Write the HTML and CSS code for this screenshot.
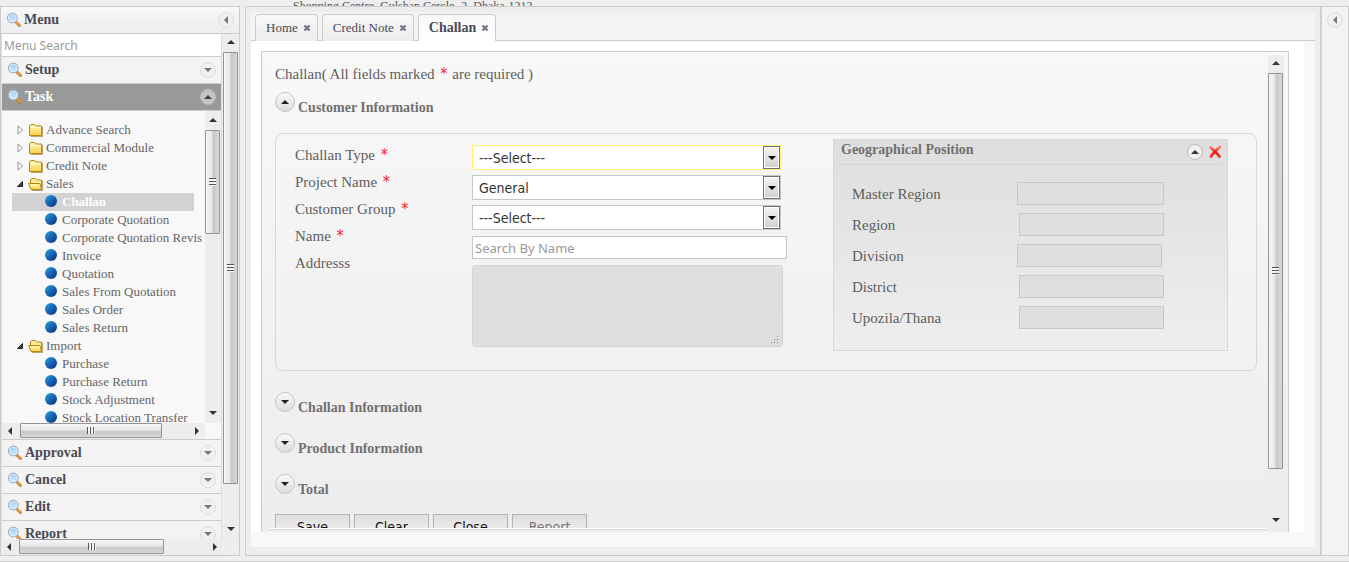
FILE: index.html
```html
<!DOCTYPE html>
<html lang="en">
<head>
<meta charset="utf-8">
<title>Challan</title>
<link rel="stylesheet" href="styles.css">
</head>
<body>
<svg width="0" height="0" class="defs" aria-hidden="true">
  <defs>
    <linearGradient id="gFolder" x1="0" y1="0" x2="0" y2="1"><stop offset="0" stop-color="#fffbb5"/><stop offset="1" stop-color="#fbd04e"/></linearGradient>
    <linearGradient id="gBall" x1="0" y1="0" x2="1" y2="1"><stop offset="0" stop-color="#2aa3dc"/><stop offset=".5" stop-color="#1565b4"/><stop offset="1" stop-color="#0a2b78"/></linearGradient>
    <linearGradient id="gLens" x1="0" y1="0" x2="0" y2="1"><stop offset="0" stop-color="#9ccdf8"/><stop offset="1" stop-color="#d6ecfd"/></linearGradient>
    <linearGradient id="gCross" x1="0" y1="0" x2="0" y2="1"><stop offset="0" stop-color="#ff8a80"/><stop offset=".5" stop-color="#f5190f"/><stop offset="1" stop-color="#e8382c"/></linearGradient>
    <symbol id="lens" viewBox="0 0 16 16">
      <path d="M10 10l3.500 3.500" stroke="#b4672a" stroke-width="2.800" stroke-linecap="round"/>
      <path d="M10 9.600l3.600 3.600" stroke="#f6a93c" stroke-width="1.600" stroke-linecap="round"/>
      <circle cx="6.300" cy="6" r="4.900" fill="url(#gLens)" stroke="#9fb1c2" stroke-width="1.100"/>
      <circle cx="6.300" cy="6" r="3.900" fill="none" stroke="#e8f4ff" stroke-width=".7"/>
    </symbol>
    <symbol id="folder" viewBox="0 0 16 14">
      <path d="M1.500 12.500V3l1.200-1.500h4L8 3h5.500v9.500z" fill="url(#gFolder)" stroke="#b8860f"/>
      <path d="M2.500 4.500h10" stroke="#fffde0"/>
      <path d="M14.500 4v9.500H3" fill="none" stroke="#8e6a1a" stroke-opacity=".6"/>
    </symbol>
    <symbol id="open" viewBox="0 0 16 14">
      <path d="M2.500 6V3l1.200-1.500h4L9 3h4.500v9H3z" fill="#fdeb9a" stroke="#b8860f"/>
      <path d="M.6 6.500h11.200l2 6H3z" fill="url(#gFolder)" stroke="#b8860f"/>
      <path d="M14.700 4v9.500H4" fill="none" stroke="#8e6a1a" stroke-opacity=".6"/>
    </symbol>
    <symbol id="ball" viewBox="0 0 12 12"><circle cx="6" cy="6" r="6" fill="url(#gBall)"/></symbol>
    <symbol id="shut" viewBox="0 0 8 10"><path d="M2 1v8l4.500-4z" fill="#fff" stroke="#999"/></symbol>
    <symbol id="down" viewBox="0 0 8 10"><path d="M6.500 2.500v5h-5z" fill="#444" stroke="#222"/></symbol>
    <symbol id="tri" viewBox="0 0 8 8"><path d="M0 6h8L4 2z"/></symbol>
    <symbol id="close" viewBox="0 0 8 8"><path d="M1.500 1.500l5 5M6.500 1.500l-5 5" stroke="#707888" stroke-width="2.400"/></symbol>
    <symbol id="cross" viewBox="0 0 14 14"><path d="M2.500 2.500C5 4 8.500 8 11.500 11.500M12 1.800C8 4.500 5 8 3 11.500" fill="none" stroke="url(#gCross)" stroke-width="2.700" stroke-linecap="round"/></symbol>
  </defs>
</svg>

<header class="top">Shopping Centre, Gulshan Cercle -2, Dhaka-1212</header>

<main class="shell">
  <aside class="side">
    <div class="side-head">
      <svg class="lens"><use href="#lens"/></svg><span class="grow">Menu</span>
      <button class="round small left" aria-label="Collapse menu"><svg><use href="#tri"/></svg></button>
    </div>
    <div class="side-body">
      <div class="side-main">
        <input class="menu-search" type="text" placeholder="Menu Search" aria-label="Menu Search">
        <div class="acc"><svg class="lens"><use href="#lens"/></svg><span class="grow">Setup</span><button class="round small flip" aria-label="Open Setup"><svg><use href="#tri"/></svg></button></div>
        <div class="acc active"><svg class="lens"><use href="#lens"/></svg><span class="grow">Task</span><button class="round small" aria-label="Close Task"><svg><use href="#tri"/></svg></button></div>
        <div class="tree-box">
          <div class="tree-row">
            <ul class="tree">
              <li><svg class="tog"><use href="#shut"/></svg><svg class="fold"><use href="#folder"/></svg>Advance Search</li>
              <li><svg class="tog"><use href="#shut"/></svg><svg class="fold"><use href="#folder"/></svg>Commercial Module</li>
              <li><svg class="tog"><use href="#shut"/></svg><svg class="fold"><use href="#folder"/></svg>Credit Note</li>
              <li><svg class="tog"><use href="#down"/></svg><svg class="fold"><use href="#open"/></svg>Sales</li>
              <li class="leaf current"><svg class="ball"><use href="#ball"/></svg>Challan</li>
              <li class="leaf"><svg class="ball"><use href="#ball"/></svg>Corporate Quotation</li>
              <li class="leaf"><svg class="ball"><use href="#ball"/></svg>Corporate Quotation Revis</li>
              <li class="leaf"><svg class="ball"><use href="#ball"/></svg>Invoice</li>
              <li class="leaf"><svg class="ball"><use href="#ball"/></svg>Quotation</li>
              <li class="leaf"><svg class="ball"><use href="#ball"/></svg>Sales From Quotation</li>
              <li class="leaf"><svg class="ball"><use href="#ball"/></svg>Sales Order</li>
              <li class="leaf"><svg class="ball"><use href="#ball"/></svg>Sales Return</li>
              <li><svg class="tog"><use href="#down"/></svg><svg class="fold"><use href="#open"/></svg>Import</li>
              <li class="leaf"><svg class="ball"><use href="#ball"/></svg>Purchase</li>
              <li class="leaf"><svg class="ball"><use href="#ball"/></svg>Purchase Return</li>
              <li class="leaf"><svg class="ball"><use href="#ball"/></svg>Stock Adjustment</li>
              <li class="leaf"><svg class="ball"><use href="#ball"/></svg>Stock Location Transfer</li>
            </ul>
            <div class="vbar" aria-hidden="true"><svg class="arr"><use href="#tri"/></svg><div class="thumb tree-thumb"><i class="grip"></i></div><svg class="arr flip end"><use href="#tri"/></svg></div>
          </div>
          <div class="hbar inset" aria-hidden="true"><svg class="arr turn-l"><use href="#tri"/></svg><div class="thumb htree"><i class="grip"></i></div><svg class="arr turn-r end"><use href="#tri"/></svg></div>
        </div>
        <div class="acc"><svg class="lens"><use href="#lens"/></svg><span class="grow">Approval</span><button class="round small flip" aria-label="Open Approval"><svg><use href="#tri"/></svg></button></div>
        <div class="acc"><svg class="lens"><use href="#lens"/></svg><span class="grow">Cancel</span><button class="round small flip" aria-label="Open Cancel"><svg><use href="#tri"/></svg></button></div>
        <div class="acc"><svg class="lens"><use href="#lens"/></svg><span class="grow">Edit</span><button class="round small flip" aria-label="Open Edit"><svg><use href="#tri"/></svg></button></div>
        <div class="acc"><svg class="lens"><use href="#lens"/></svg><span class="grow">Report</span><button class="round small flip" aria-label="Open Report"><svg><use href="#tri"/></svg></button></div>
      </div>
      <div class="vbar" aria-hidden="true"><svg class="arr"><use href="#tri"/></svg><div class="thumb side-thumb"><i class="grip"></i></div><svg class="arr flip end"><use href="#tri"/></svg></div>
    </div>
    <div class="hbar inset" aria-hidden="true"><svg class="arr turn-l"><use href="#tri"/></svg><div class="thumb hside"><i class="grip"></i></div><svg class="arr turn-r end"><use href="#tri"/></svg></div>
  </aside>

  <section class="center">
    <nav class="tabs">
      <a class="tab" href="#">Home<svg><use href="#close"/></svg></a>
      <a class="tab" href="#">Credit Note<svg><use href="#close"/></svg></a>
      <a class="tab on" href="#">Challan<svg><use href="#close"/></svg></a>
    </nav>
    <div class="page">
      <div class="panel">
        <div class="form">
          <p class="intro">Challan( All fields marked <b class="req">*</b> are required )</p>
          <div class="sec first"><button class="round" aria-label="Collapse Customer Information"><svg><use href="#tri"/></svg></button><h2>Customer Information</h2></div>
          <div class="group">
            <div class="labels">
              <label for="type">Challan Type <b class="req">*</b></label>
              <label for="project">Project Name <b class="req">*</b></label>
              <label for="cgroup">Customer Group <b class="req">*</b></label>
              <label for="name">Name <b class="req">*</b></label>
              <label for="address">Addresss</label>
            </div>
            <div class="fields">
              <div class="pick focus"><select id="type"><option>---Select---</option></select><span class="drop"><svg><use href="#tri"/></svg></span></div>
              <div class="pick"><select id="project"><option>General</option></select><span class="drop"><svg><use href="#tri"/></svg></span></div>
              <div class="pick"><select id="cgroup"><option>---Select---</option></select><span class="drop"><svg><use href="#tri"/></svg></span></div>
              <input id="name" class="name" type="text" placeholder="Search By Name">
              <div class="area"><textarea id="address" readonly></textarea>
                <svg class="size" viewBox="0 0 9 9"><path d="M6 0h2v2H6zM3 3h2v2H3zM6 3h2v2H6zM0 6h2v2H0zM3 6h2v2H3zM6 6h2v2H6z" fill="#b4b4b6"/><path d="M7 1h1v1H7zM4 4h1v1H4zM7 4h1v1H7zM1 7h1v1H1zM4 7h1v1H4zM7 7h1v1H7z" fill="#fff"/></svg></div>
            </div>
            <div class="geo">
              <div class="geo-head"><h2 class="grow">Geographical Position</h2><button class="round small dark" aria-label="Collapse"><svg><use href="#tri"/></svg></button><button class="remove" aria-label="Remove"><svg><use href="#cross"/></svg></button></div>
              <div class="geo-grid">
                <label for="master">Master Region</label><input id="master" class="wide" readonly>
                <label for="region">Region</label><input id="region" readonly>
                <label for="division">Division</label><input id="division" class="start" readonly>
                <label for="district">District</label><input id="district" readonly>
                <label for="thana">Upozila/Thana</label><input id="thana" readonly>
              </div>
            </div>
          </div>
          <div class="sec"><button class="round flip" aria-label="Open Challan Information"><svg><use href="#tri"/></svg></button><h2>Challan Information</h2></div>
          <div class="sec"><button class="round flip" aria-label="Open Product Information"><svg><use href="#tri"/></svg></button><h2>Product Information</h2></div>
          <div class="sec"><button class="round flip" aria-label="Open Total"><svg><use href="#tri"/></svg></button><h2>Total</h2></div>
          <div class="actions"><button>Save</button><button>Clear</button><button>Close</button><button disabled>Report</button></div>
        </div>
        <div class="vbar" aria-hidden="true"><svg class="arr"><use href="#tri"/></svg><div class="thumb form-thumb"><i class="grip"></i></div><svg class="arr flip end"><use href="#tri"/></svg></div>
      </div>
    </div>
  </section>

  <aside class="right"><button class="round small left" aria-label="Expand panel"><svg><use href="#tri"/></svg></button></aside>
</main>
<footer class="foot"></footer>
</body>
</html>
```
FILE: styles.css
```css
* { box-sizing: border-box; }
body {
  margin: 0;
  height: 100vh;
  display: flex;
  flex-direction: column;
  overflow: hidden;
  background: #eeeeee;
  color: #5e5e5e;
  font: 15px/20px "Liberation Serif", serif;
}
h2, p, ul { margin: 0; padding: 0; }
button, input, select, textarea { font: 13px/18px "Noto Sans", sans-serif; margin: 0; }
.defs { position: absolute; }
.grow { flex: 1; }
.flip svg, svg.flip { transform: rotate(180deg); }
.left svg, .turn-l { transform: rotate(-90deg); }
.turn-r { transform: rotate(90deg); }

.top { height: 6px; flex: none; padding-left: 293px; overflow: hidden; line-height: 12px; font-size: 12px; white-space: nowrap; color: #555; }
.shell { flex: 1; min-height: 0; display: flex; }
.foot { height: 6px; border-bottom: 1px solid #ccc; flex: none; }

/* Round arrow buttons */
.round {
  width: 20px; height: 20px; padding: 0; flex: none;
  display: flex; align-items: center; justify-content: center;
  border: 1px solid #c6c6c6; border-radius: 50%;
  background: linear-gradient(#fafafa, #dcdcdc);
}
.round svg { width: 8px; height: 8px; fill: #222; }
.round.small { width: 16px; height: 16px; border-color: #dcdcdc; background: #f0f0f0; }
.round.small svg { width: 8px; height: 8px; fill: #777; }
.round.dark { border-color: #bbb; }
.round.small.dark svg { fill: #333; }

/* Scroll bars */
.vbar { width: 16px; flex: none; display: flex; flex-direction: column; align-items: flex-start; background: #ededed; }
.hbar { height: 16px; flex: none; display: flex; align-items: flex-start; background: #ededed; }
.arr { width: 8px; height: 8px; margin: 4px; flex: none; fill: #333; }
.vbar .end { margin-top: auto; }
.hbar .end { margin-left: auto; }
.thumb { display: flex; align-items: center; justify-content: center; border: 1px solid #949498; border-radius: 1px; }
.vbar .thumb { width: 15px; background: linear-gradient(90deg, #f7f7f7, #e6e6e8 45%, #c8c8cc 55%, #d8d8da); }
.hbar .thumb { height: 15px; background: linear-gradient(#f7f7f7, #e6e6e8 45%, #c8c8cc 60%, #d8d8da); }
.grip { width: 7px; height: 8px; background: repeating-linear-gradient(#555 0 1px, #f5f5f5 1px 3px); }
.hbar .grip { width: 8px; height: 7px; background: repeating-linear-gradient(90deg, #555 0 1px, #f5f5f5 1px 3px); }
.side-thumb { height: 432px; margin-top: 2px; }
.tree-thumb { height: 104px; margin-top: 2px; }
.form-thumb { height: 396px; margin-top: 2px; }
.hside { width: 145px; margin-left: 2px; }
.htree { width: 142px; margin-left: 2px; }

/* Left menu */
.side { width: 240px; flex: none; display: flex; flex-direction: column; border: 1px solid #ccc; background: #eee; }
.side-head { height: 27px; flex: none; display: flex; align-items: center; padding: 0 5px; border-bottom: 1px solid #ccc; background: linear-gradient(#f8f8f8, #ededed); color: #4a4a55; font-size: 14px; font-weight: bold; }
.lens { width: 16px; height: 16px; margin-right: 2px; flex: none; }
.side-body { flex: 1; min-height: 0; display: flex; }
.side-main { flex: 1; min-width: 0; overflow: hidden; margin-right: 1px; border-left: 1px solid #ddd; border-right: 1px solid #ddd; }
.side-body > .vbar { padding-bottom: 2px; }
.menu-search { display: block; width: 100%; height: 23px; padding: 0 2px; border: 0; border-bottom: 1px solid #ccc; background: #fff; font-size: 12px; color: #444; }
::placeholder { color: #999; opacity: 1; }
.acc { height: 27px; display: flex; align-items: center; padding: 0 5px; border-bottom: 1px solid #ccc; background: #f3f3f3; color: #4a4a55; font-size: 14px; font-weight: bold; }
.acc.active { background: #999; color: #fff; }
.acc.active .round { background: #c4c4c4; border-color: #bbb; }
.acc.active .round svg { fill: #444; }
.tree-box { height: 329px; display: flex; flex-direction: column; border-bottom: 1px solid #ccc; background: #f8f8f8; }
.tree-row { flex: 1; min-height: 0; display: flex; }
.tree-row .vbar { padding: 1px 0 2px; }
.tree { flex: 1; min-width: 0; overflow: hidden; list-style: none; padding: 10px 0 0 10px; font-size: 13px; line-height: 18px; color: #666; white-space: nowrap; }
.tree li { height: 18px; display: flex; align-items: center; padding-left: 4px; }
.tree .leaf { padding-left: 33px; }
.tree .current { width: 182px; background: #d2d2d2; color: #fff; font-weight: bold; }
.tog { width: 8px; height: 10px; margin-right: 4px; flex: none; }
.fold { width: 16px; height: 14px; margin-right: 2px; flex: none; }
.ball { width: 12px; height: 12px; margin: 0 5px 3px 0; flex: none; }
.inset { margin-right: 16px; }

/* Centre */
.center { flex: 1; min-width: 0; display: flex; flex-direction: column; margin-left: 5px; padding: 5px; padding-bottom: 8px; border: 1px solid #ccc; border-right: 0; background: #ededed; }
.tabs { height: 29px; flex: none; display: flex; gap: 4px; padding: 2px 4px 0; border-bottom: 1px solid #ccc; background: #f3f3f3; }
.tab { height: 27px; display: flex; align-items: center; gap: 5px; padding: 0 6px 0 10px; border: 1px solid #ccc; border-bottom-width: 0; border-radius: 4px 4px 0 0; background: linear-gradient(#f8f8f8, #ececec); color: #4a4a55; font-size: 13px; text-decoration: none; }
.tab svg { width: 8px; height: 8px; }
.tab.on { margin-bottom: -1px; background: linear-gradient(#f8f8f8, #fff); font-size: 14px; font-weight: bold; }
.page { flex: 1; min-height: 0; display: flex; padding: 10px 15px 0 10px; margin-right: 11px; background: #fff; box-shadow: 11px 0 #f8f8f8, 11px 15px #f8f8f8, 0 15px #f8f8f8; margin-bottom: 15px; clip-path: inset(0 -11px -15px 0); }
.panel { flex: 1; min-width: 0; display: flex; padding: 3px 4px 0 7px; border: 1px solid #ccc; border-bottom: 0; background: linear-gradient(#f8f8f8, #ededed); }
.panel > .vbar { padding-bottom: 4px; }
.form { flex: 1; min-width: 0; overflow: hidden; padding: 9px 10px 0 6px; margin: 0 1px 3px 0; border-bottom: 1px solid #fff; box-shadow: 0 1px #ddd; }
.intro { line-height: 20px; }
.req { margin: 0 1px 0 2px; color: #f22; font: 16px/18px "DejaVu Sans Condensed", sans-serif; }
.sec { display: flex; align-items: flex-start; gap: 3px; height: 20px; margin-top: 21px; }
.sec.first { margin-top: 8px; }
h2 { color: #707070; font-size: 14px; line-height: 20px; }
.sec h2 { padding-top: 6px; }
.group { display: flex; align-items: flex-start; margin: 21px 0 0; height: 238px; border: 1px solid #d8d8d8; border-radius: 8px; padding: 5px 28px 0 19px; }
.labels { width: 177px; flex: none; display: flex; flex-direction: column; padding-top: 3px; }
.labels label { height: 27px; line-height: 27px; }
.fields { width: 315px; flex: none; padding-top: 6px; }
.pick { position: relative; width: 309px; height: 25px; margin-bottom: 5px; border: 1px solid #c6c6c6; background: #fff; }
.pick.focus { border-color: #fbf277; }
.pick select { appearance: none; width: 100%; height: 100%; padding: 0 22px 0 6px; border: 0; background: none; color: #333; font: 14px/18px "DejaVu Sans Condensed", sans-serif; }
.drop { position: absolute; top: 0; right: 0; width: 17px; height: 23px; display: flex; align-items: center; justify-content: center; border: 1px solid #707070; background: linear-gradient(#f4f4f4, #d0d0d0); pointer-events: none; box-shadow: inset 0 0 0 1px #fff; }
.drop svg { width: 8px; height: 8px; fill: #000; transform: rotate(180deg); }
.name { display: block; width: 315px; height: 23px; margin: 6px 0; padding: 0 2px; border: 1px solid #c6c6c6; background: #fff; color: #333; }
.area { position: relative; width: 311px; height: 82px; }
.area textarea { display: block; width: 100%; height: 100%; resize: none; border: 1px solid #d2d2d4; border-radius: 4px; background: #dfdfe1; }
.size { position: absolute; right: 3px; bottom: 2px; width: 9px; height: 9px; }
.geo { flex: 1; min-width: 0; margin-left: 46px; height: 212px; border: 1px solid #d8d8d8; background: linear-gradient(#dedede, #eeeeee); }
.geo-head { height: 25px; display: flex; align-items: center; margin: 0 4px; padding: 0 1px 0 3px; border-bottom: 1px solid #d4d4d4; }
.geo-head h2 { padding-bottom: 4px; }
.remove { width: 14px; height: 14px; margin-left: 5px; padding: 0; border: 0; background: none; }
.remove svg { display: block; width: 14px; height: 14px; }
.geo-grid { display: grid; grid-template-columns: 165px 147px; grid-auto-rows: 23px; row-gap: 8px; align-items: center; padding: 17px 0 0 18px; }
.geo-grid input { width: 145px; height: 23px; border: 1px solid #c8c8ca; background: #dfdfe1; justify-self: end; }
.geo-grid .wide { width: 147px; }
.geo-grid .start { justify-self: start; }
.actions { display: flex; gap: 4px; margin-top: 20px; }
.actions button { width: 75px; height: 26px; padding: 0; border: 1px solid #b4b4b4; background: linear-gradient(#dedede, #f4f4f4); color: #111; font: 14px/18px "DejaVu Sans Condensed", sans-serif; }
.actions button:disabled { color: #777; }

.right { width: 29px; flex: none; border: 1px solid #ccc; border-left: 2px solid #d0d0d0; background: #f3f3f3; padding: 5px; }
```
